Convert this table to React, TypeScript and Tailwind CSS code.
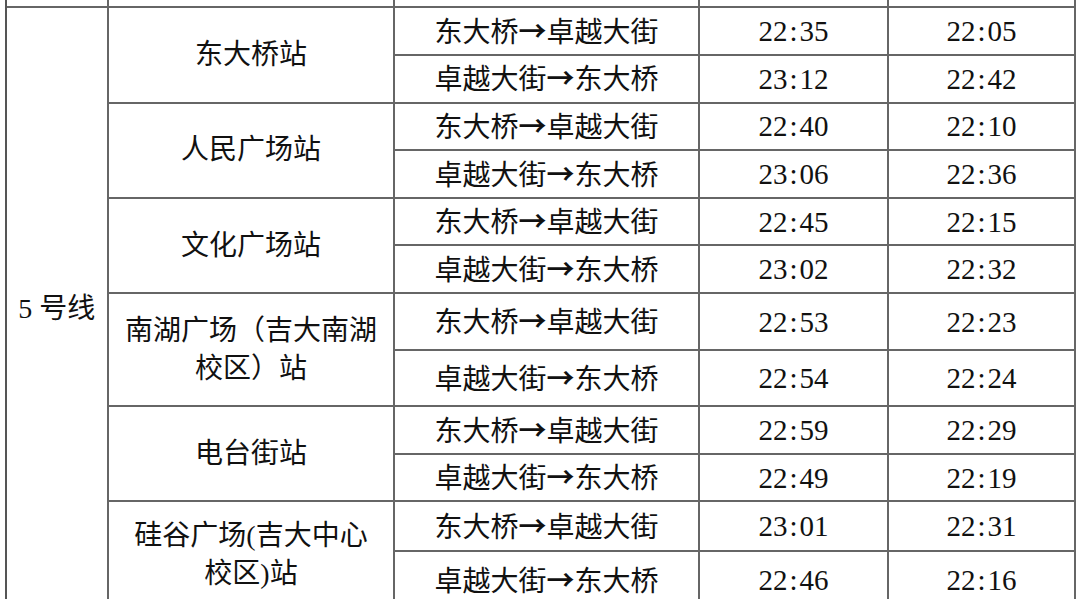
import React from "react";

const FONT = "font-['Liberation_Serif','Noto_Sans_CJK_SC',serif]";
const CELL = "border-r-2 border-b-2 border-[#666] flex items-center justify-center text-center";

type Row = { dir: string; a: string; b: string };
type Station = { name: React.ReactNode; rows: [Row, Row] };

const E2W = "东大桥→卓越大街";
const W2E = "卓越大街→东大桥";

const stations: Station[] = [
  { name: "东大桥站", rows: [{ dir: E2W, a: "22:35", b: "22:05" }, { dir: W2E, a: "23:12", b: "22:42" }] },
  { name: "人民广场站", rows: [{ dir: E2W, a: "22:40", b: "22:10" }, { dir: W2E, a: "23:06", b: "22:36" }] },
  { name: "文化广场站", rows: [{ dir: E2W, a: "22:45", b: "22:15" }, { dir: W2E, a: "23:02", b: "22:32" }] },
  {
    name: (
      <>
        南湖广场（吉大南湖
        <br />
        校区）站
      </>
    ),
    rows: [{ dir: E2W, a: "22:53", b: "22:23" }, { dir: W2E, a: "22:54", b: "22:24" }],
  },
  { name: "电台街站", rows: [{ dir: E2W, a: "22:59", b: "22:29" }, { dir: W2E, a: "22:49", b: "22:19" }] },
  {
    name: (
      <>
        硅谷广场(吉大中心
        <br />
        校区)站
      </>
    ),
    rows: [{ dir: E2W, a: "23:01", b: "22:31" }, { dir: W2E, a: "22:46", b: "22:16" }],
  },
];

function Dir({ text }: { text: string }) {
  const [l, r] = text.split("→");
  return (
    <span className="whitespace-nowrap">
      {l}
      <span className="font-['Noto_Sans_CJK_SC',sans-serif] font-bold">→</span>
      {r}
    </span>
  );
}

function Time({ t }: { t: string }) {
  const [h, m] = t.split(":");
  return (
    <span className="whitespace-nowrap text-[29px]">
      {h}
      <span className="mx-[2px]">:</span>
      {m}
    </span>
  );
}

export default function App() {
  return (
    <div className={`w-[1080px] h-[599px] overflow-hidden bg-white text-[#111] ${FONT} text-[28px] leading-[38px]`}>
      <div className="ml-[4.5px] w-[1071.5px] border-l-2 border-[#555] grid grid-cols-[102.5px_286px_305px_189px_187px] grid-rows-[8px_48px_47.5px_47.5px_48px_47px_48px_57px_56px_48px_47px_50px_58px]">
        <div className={CELL} />
        <div className={CELL} />
        <div className={CELL} />
        <div className={CELL} />
        <div className={CELL} />
        <div className={`${CELL} row-span-12 pt-[2px]`}>5 号线</div>
        {stations.map((s, i) => (
          <React.Fragment key={i}>
            <div className={`${CELL} row-span-2`}>
              <div>{s.name}</div>
            </div>
            {s.rows.map((r, j) => (
              <React.Fragment key={j}>
                <div className={CELL}>
                  <Dir text={r.dir} />
                </div>
                <div className={CELL}>
                  <Time t={r.a} />
                </div>
                <div className={CELL}>
                  <Time t={r.b} />
                </div>
              </React.Fragment>
            ))}
          </React.Fragment>
        ))}
      </div>
    </div>
  );
}
